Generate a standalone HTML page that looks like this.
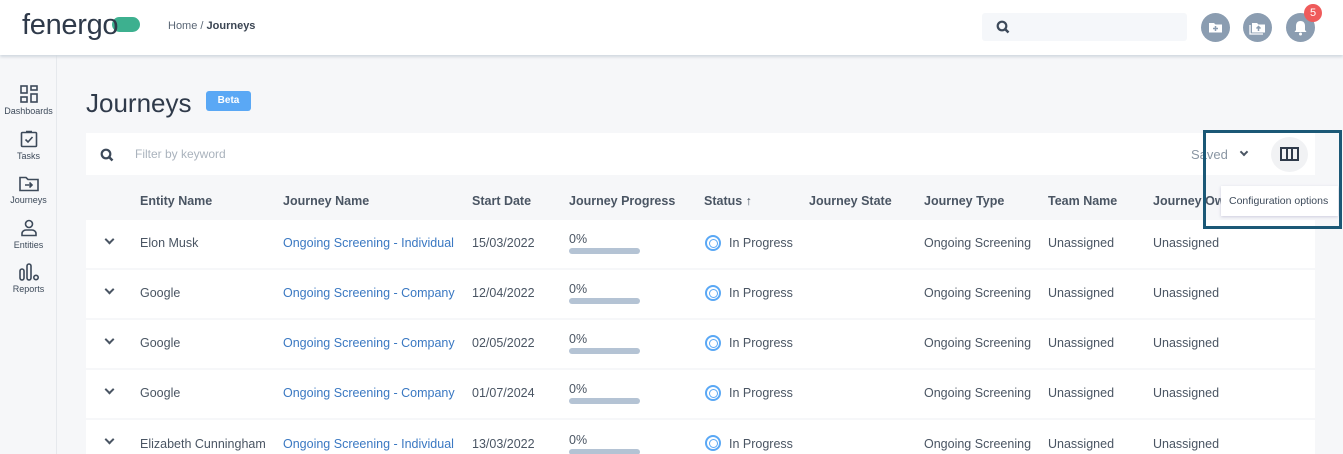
<!DOCTYPE html>
<html><head><style>
*{box-sizing:border-box;margin:0;padding:0}
html,body{width:1343px;height:454px;overflow:hidden}
body{background:#f6f7f9;font-family:"Liberation Sans",sans-serif;color:#3f4a56;position:relative}
.hdr{position:absolute;left:0;top:0;width:1343px;height:55px;background:#fff;box-shadow:0 2px 3px #cfd6de;z-index:2}
.logo{position:absolute;left:22px;top:9px;font-size:29px;color:#2f3a4a;letter-spacing:-0.3px;z-index:1}
.pill{position:absolute;left:112px;top:17px;width:28px;height:15px;border-radius:8px;background:#3db08f}
.bc{position:absolute;left:168px;top:20px;font-size:11px;color:#5a6675}
.bc b{color:#3a4452}
.search{position:absolute;left:982px;top:13px;width:205px;height:28px;background:#f5f7fa;border-radius:3px}
.circ{position:absolute;top:13px;width:29px;height:29px;border-radius:50%;background:#8b9db1}
.badge{position:absolute;left:1304px;top:4px;width:18px;height:18px;border-radius:50%;background:#ef5b5b;color:#fff;font-size:11px;text-align:center;line-height:18px}
.side{position:absolute;left:0;top:55px;width:57px;height:399px;background:#f6f7f9;border-right:1px solid #e6e9ed}
.si{position:absolute;left:0;width:57px;text-align:center;font-size:9px;color:#3d4a5a}
.si svg{display:block;margin:0 auto 3px}
h1{position:absolute;left:86px;top:88px;font-weight:normal;font-size:26px;color:#2f3a4a}
.beta{position:absolute;left:206px;top:91px;width:45px;height:20px;background:#5aa8f5;border-radius:3px;color:#fff;font-size:10px;font-weight:bold;text-align:center;line-height:20px}
.filter{position:absolute;left:86px;top:133px;width:1229px;height:42px;background:#fff}
.filter .ph{position:absolute;left:49px;top:14px;font-size:12px;color:#aab3bd}
.saved{position:absolute;left:1191px;top:147px;font-size:13px;color:#8a96a3}
.colbtn{position:absolute;left:1271px;top:137px;width:37px;height:35px;border-radius:50%;background:#f1f2f4}
.thead{position:absolute;left:86px;top:180px;width:1229px;height:40px;background:#f6f7f9}
.th{position:absolute;top:194px;font-size:12.5px;font-weight:bold;color:#4a5563}
.row{position:absolute;left:86px;width:1229px;height:48px;background:#fff}
.c{position:absolute;font-size:12.5px;color:#4a5563}
.lnk{color:#3a78c2}
.bar{position:absolute;width:71px;height:6px;border-radius:3px;background:#b4c3d4}
.ring{position:absolute;width:16px;height:16px;border-radius:50%;border:2px solid #5aa8f5}
.ring:after{content:"";position:absolute;left:2px;top:2px;border-radius:50%;border:1.5px solid #5aa8f5;box-sizing:border-box;width:9px;height:9px}
.chev{position:absolute;width:7px;height:7px;border-right:2px solid #4a5563;border-bottom:2px solid #4a5563;transform:rotate(45deg)}
.tip{position:absolute;left:1221px;top:186px;width:117px;height:30px;background:#fff;box-shadow:0 1px 3px #ccd;font-size:10.5px;color:#3d4a5a;line-height:30px;padding-left:8px}
.box{position:absolute;left:1203px;top:130px;width:139px;height:99px;border:3px solid #1b5876}
</style></head><body>
<div class="hdr">
 <div class="pill"></div>
 <div class="logo">fenergo</div>
 <div class="bc">Home / <b>Journeys</b></div>
 <div class="search"><svg style="position:absolute;left:14px;top:7px" width="14" height="14" viewBox="0 0 14 14"><circle cx="6" cy="6" r="4.3" fill="none" stroke="#3d4a5a" stroke-width="2.2"/><path d="M9 9l3.5 3.5" stroke="#3d4a5a" stroke-width="2.5"/></svg></div>
 <div class="circ" style="left:1201px"><svg width="29" height="29"><path d="M8 10h5l1.5 1.5H21v8H8z" fill="#fff"/><path d="M14.5 13v5M12 15.5h5" stroke="#8b9db1" stroke-width="1.5"/></svg></div>
 <div class="circ" style="left:1243px"><svg width="29" height="29"><path d="M9 10h5l1.5 1.5H22v8H9z" fill="#fff"/><path d="M7 12v9h13" fill="none" stroke="#fff" stroke-width="1.3"/><path d="M15.5 18v-4M13.5 15.5l2-2 2 2" stroke="#8b9db1" stroke-width="1.5" fill="none"/></svg></div>
 <div class="circ" style="left:1286px"><svg width="29" height="29"><path d="M14.5 8c3 0 4.5 2 4.5 5v4l1.5 2h-12l1.5-2v-4c0-3 1.5-5 4.5-5z" fill="#fff"/><circle cx="14.5" cy="21" r="1.5" fill="#fff"/></svg></div>
 <div class="badge">5</div>
</div>
<div class="side">
 <div class="si" style="top:30px"><svg width="18" height="18" viewBox="0 0 18 18" fill="none" stroke="#3d4a5a" stroke-width="1.6"><rect x="1" y="1" width="6" height="7"/><rect x="11" y="1" width="6" height="4"/><rect x="1" y="12" width="6" height="5"/><rect x="11" y="9" width="6" height="8"/></svg>Dashboards</div>
 <div class="si" style="top:75px"><svg width="18" height="18" viewBox="0 0 18 18" fill="none" stroke="#3d4a5a" stroke-width="1.6"><rect x="1.5" y="2.5" width="15" height="14" rx="1"/><path d="M6 1.5h6M5.5 9.5l2.5 2.5 4.5-5"/></svg>Tasks</div>
 <div class="si" style="top:121px"><svg width="20" height="16" viewBox="0 0 20 16" fill="none" stroke="#3d4a5a" stroke-width="1.6"><path d="M1 1.5h6l2 2h10v11H1z"/><path d="M6 9h7M10.5 6.5L13 9l-2.5 2.5"/></svg>Journeys</div>
 <div class="si" style="top:164px"><svg width="18" height="18" viewBox="0 0 18 18" fill="none" stroke="#3d4a5a" stroke-width="1.6"><circle cx="9" cy="5" r="3.5"/><path d="M2 16.5v-2c0-2 2-3.5 4-3.5h6c2 0 4 1.5 4 3.5v2z"/></svg>Entities</div>
 <div class="si" style="top:208px"><svg width="20" height="18" viewBox="0 0 20 18" fill="none" stroke="#3d4a5a" stroke-width="1.6"><rect x="1" y="6" width="4" height="11" rx="2"/><rect x="8" y="1" width="4" height="16" rx="2"/><circle cx="17" cy="14.5" r="2.2"/></svg>Reports</div>
</div>
<h1>Journeys</h1><div class="beta">Beta</div>
<div class="filter"><svg style="position:absolute;left:14px;top:15px" width="14" height="14" viewBox="0 0 14 14"><circle cx="6" cy="6" r="4.3" fill="none" stroke="#3d4a5a" stroke-width="2.2"/><path d="M9 9l3.5 3.5" stroke="#3d4a5a" stroke-width="2.5"/></svg><span class="ph">Filter by keyword</span></div>
<div class="saved">Saved</div><div class="chev" style="left:1241px;top:149px;width:6px;height:6px"></div>
<div class="colbtn"><svg style="position:absolute;left:9px;top:10px" width="19" height="14" viewBox="0 0 19 14" fill="none" stroke="#2f3a4a" stroke-width="2"><rect x="1" y="1" width="17" height="12"/><path d="M7 1v12M12 1v12"/></svg></div>
<div class="thead"></div>
<div class="th" style="left:140px">Entity Name</div>
<div class="th" style="left:283px">Journey Name</div>
<div class="th" style="left:472px">Start Date</div>
<div class="th" style="left:569px">Journey Progress</div>
<div class="th" style="left:704px">Status &#8593;</div>
<div class="th" style="left:809px">Journey State</div>
<div class="th" style="left:924px">Journey Type</div>
<div class="th" style="left:1048px">Team Name</div>
<div class="th" style="left:1153px">Journey Ow</div>

<div class="row" style="top:220px"></div>
<div class="row" style="top:270px"></div>
<div class="row" style="top:320px"></div>
<div class="row" style="top:370px"></div>
<div class="row" style="top:420px"></div>

<div class="chev" style="left:106px;top:236px"></div><div class="c" style="left:140px;top:236px">Elon Musk</div><div class="c lnk" style="left:283px;top:236px">Ongoing Screening - Individual</div><div class="c" style="left:472px;top:236px">15/03/2022</div><div class="c" style="left:569px;top:232px">0%</div><div class="bar" style="left:569px;top:248px"></div><div class="ring" style="left:705px;top:235px"></div><div class="c" style="left:729px;top:236px">In Progress</div><div class="c" style="left:924px;top:236px">Ongoing Screening</div><div class="c" style="left:1048px;top:236px">Unassigned</div><div class="c" style="left:1153px;top:236px">Unassigned</div>

<div class="chev" style="left:106px;top:286px"></div><div class="c" style="left:140px;top:286px">Google</div><div class="c lnk" style="left:283px;top:286px">Ongoing Screening - Company</div><div class="c" style="left:472px;top:286px">12/04/2022</div><div class="c" style="left:569px;top:282px">0%</div><div class="bar" style="left:569px;top:298px"></div><div class="ring" style="left:705px;top:285px"></div><div class="c" style="left:729px;top:286px">In Progress</div><div class="c" style="left:924px;top:286px">Ongoing Screening</div><div class="c" style="left:1048px;top:286px">Unassigned</div><div class="c" style="left:1153px;top:286px">Unassigned</div>

<div class="chev" style="left:106px;top:336px"></div><div class="c" style="left:140px;top:336px">Google</div><div class="c lnk" style="left:283px;top:336px">Ongoing Screening - Company</div><div class="c" style="left:472px;top:336px">02/05/2022</div><div class="c" style="left:569px;top:332px">0%</div><div class="bar" style="left:569px;top:348px"></div><div class="ring" style="left:705px;top:335px"></div><div class="c" style="left:729px;top:336px">In Progress</div><div class="c" style="left:924px;top:336px">Ongoing Screening</div><div class="c" style="left:1048px;top:336px">Unassigned</div><div class="c" style="left:1153px;top:336px">Unassigned</div>

<div class="chev" style="left:106px;top:386px"></div><div class="c" style="left:140px;top:386px">Google</div><div class="c lnk" style="left:283px;top:386px">Ongoing Screening - Company</div><div class="c" style="left:472px;top:386px">01/07/2024</div><div class="c" style="left:569px;top:382px">0%</div><div class="bar" style="left:569px;top:398px"></div><div class="ring" style="left:705px;top:385px"></div><div class="c" style="left:729px;top:386px">In Progress</div><div class="c" style="left:924px;top:386px">Ongoing Screening</div><div class="c" style="left:1048px;top:386px">Unassigned</div><div class="c" style="left:1153px;top:386px">Unassigned</div>

<div class="chev" style="left:106px;top:436px"></div><div class="c" style="left:140px;top:437px">Elizabeth Cunningham</div><div class="c lnk" style="left:283px;top:437px">Ongoing Screening - Individual</div><div class="c" style="left:472px;top:437px">13/03/2022</div><div class="c" style="left:569px;top:433px">0%</div><div class="bar" style="left:569px;top:449px"></div><div class="ring" style="left:705px;top:435px"></div><div class="c" style="left:729px;top:437px">In Progress</div><div class="c" style="left:924px;top:437px">Ongoing Screening</div><div class="c" style="left:1048px;top:437px">Unassigned</div><div class="c" style="left:1153px;top:437px">Unassigned</div>

<div class="tip">Configuration options</div>
<div class="box"></div>
</body></html>
